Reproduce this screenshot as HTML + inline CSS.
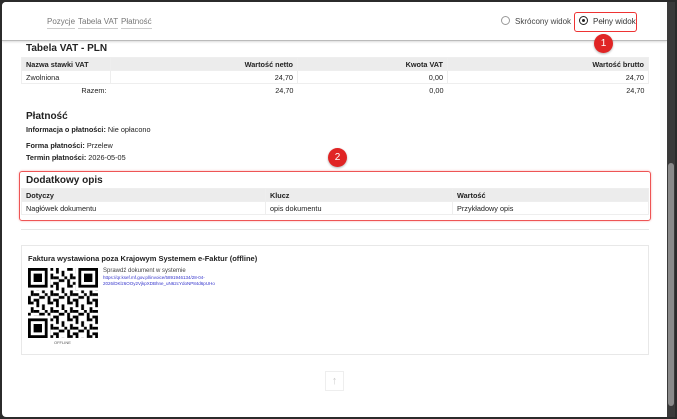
<!DOCTYPE html>
<html><head><meta charset="utf-8"><style>
*{margin:0;padding:0;box-sizing:border-box}
body{width:677px;height:419px;overflow:hidden;background:#2b2b2b;font-family:"Liberation Sans",sans-serif;color:#222;position:relative}
.win{position:absolute;left:2px;top:2px;width:665px;height:415px;background:#fff;border-radius:4px 0 0 4px;overflow:hidden}
.sb{position:absolute;left:667px;top:2px;width:8px;height:415px;background:#3a3a3a}
.thumb{position:absolute;left:668px;top:163px;width:6px;height:243px;background:#8a8a8a;border-radius:3px}
.hdr{position:absolute;left:0;top:0;width:665px;height:39px;background:#fff;border-bottom:1px solid #bbb;box-shadow:0 1px 2px rgba(0,0,0,.15)}
.tab{position:absolute;top:15px;font-size:8px;color:#777;border-bottom:1px solid #ccc;padding-bottom:2px}
.radio{position:absolute;width:9px;height:9px;border:1px solid #999;border-radius:50%}
.abs{position:absolute}
.badge{position:absolute;width:19px;height:19px;border-radius:50%;background:#e02424;color:#fff;font-size:10px;text-align:center;line-height:19px;box-shadow:0 1px 2px rgba(0,0,0,.3)}
table{border-collapse:collapse;font-size:7.3px;position:absolute}
td,th{height:13px;padding:0 4px;border:1px solid #eee}
th{background:#ececec;font-weight:bold;text-align:left}
.r{text-align:right}
h2{position:absolute;font-size:10px;font-weight:bold}
.p{position:absolute;font-size:7.3px;left:24px}
</style></head><body>
<div class="win">
 <div class="hdr">
  <span class="tab" style="left:45px">Pozycje</span>
  <span class="tab" style="left:76px">Tabela VAT</span>
  <span class="tab" style="left:119px">Płatność</span>
  <div class="radio" style="left:499px;top:14px"></div>
  <span class="abs" style="left:513px;top:15px;font-size:8px;color:#444">Skrócony widok</span>
  <div class="abs" style="left:572px;top:10px;width:63px;height:20px;border:1.5px solid #e33;border-radius:3px"></div>
  <div class="radio" style="left:577px;top:14px;border-color:#222"><div style="position:absolute;left:2px;top:2px;width:3px;height:3px;background:#222;border-radius:50%"></div></div>
  <span class="abs" style="left:591px;top:15px;font-size:8px;color:#333">Pełny widok</span>
 </div>
 <div class="badge" style="left:592px;top:32px">1</div>
 <h2 style="left:24px;top:41px">Tabela VAT - PLN</h2>
 <table style="left:19px;top:55px;width:628px">
  <tr><th style="width:89px">Nazwa stawki VAT</th><th class="r" style="width:187px">Wartość netto</th><th class="r" style="width:150px">Kwota VAT</th><th class="r">Wartość brutto</th></tr>
  <tr><td>Zwolniona</td><td class="r">24,70</td><td class="r">0,00</td><td class="r">24,70</td></tr>
  <tr><td class="r" style="border:none">Razem:</td><td class="r" style="border:none">24,70</td><td class="r" style="border:none">0,00</td><td class="r" style="border:none">24,70</td></tr>
 </table>
 <h2 style="left:24px;top:109px">Płatność</h2>
 <div class="p" style="top:123px"><b>Informacja o płatności:</b> Nie opłacono</div>
 <div class="p" style="top:139px"><b>Forma płatności:</b> Przelew</div>
 <div class="p" style="top:151px"><b>Termin płatności:</b> 2026-05-05</div>
 <div class="badge" style="left:326px;top:146px">2</div>
 <div class="abs" style="left:17px;top:169px;width:632px;height:50px;border:1.5px solid #e55;border-radius:3px;box-shadow:0 0 2px rgba(230,60,60,.4)"></div>
 <h2 style="left:24px;top:173px">Dodatkowy opis</h2>
 <table style="left:19px;top:186px;width:628px">
  <tr><th style="width:244px">Dotyczy</th><th style="width:187px">Klucz</th><th>Wartość</th></tr>
  <tr><td>Nagłówek dokumentu</td><td>opis dokumentu</td><td>Przykładowy opis</td></tr>
 </table>
 <div class="abs" style="left:19px;top:227px;width:628px;height:1px;background:#e6e6e6"></div>
 <div class="abs" style="left:19px;top:243px;width:628px;height:110px;border:1px solid #e8e8e8"></div>
 <div class="abs" style="left:26px;top:252px;font-size:7.5px;font-weight:bold">Faktura wystawiona poza Krajowym Systemem e-Faktur (offline)</div>
 <svg class="abs" style="left:26px;top:266px" width="70" height="70" viewBox="0 0 25 25">
  <defs><pattern id="q" width="7" height="6" patternUnits="userSpaceOnUse">
   <rect x="0" y="0" width="2" height="1"/><rect x="3" y="0" width="1" height="2"/><rect x="1" y="2" width="1" height="2"/><rect x="2" y="3" width="2" height="1"/><rect x="4" y="4" width="2" height="1"/><rect x="0" y="4" width="1" height="2"/><rect x="5" y="1" width="1" height="2"/><rect x="6" y="3" width="1" height="1"/><rect x="2" y="5" width="2" height="1"/>
  </pattern></defs>
  <rect width="25" height="25" fill="url(#q)"/>
  <g><rect x="0" y="0" width="8" height="8" fill="#fff"/><rect x="0" y="0" width="7" height="7"/><rect x="1" y="1" width="5" height="5" fill="#fff"/><rect x="2" y="2" width="3" height="3"/></g>
  <g><rect x="17" y="0" width="8" height="8" fill="#fff"/><rect x="18" y="0" width="7" height="7"/><rect x="19" y="1" width="5" height="5" fill="#fff"/><rect x="20" y="2" width="3" height="3"/></g>
  <g><rect x="0" y="17" width="8" height="8" fill="#fff"/><rect x="0" y="18" width="7" height="7"/><rect x="1" y="19" width="5" height="5" fill="#fff"/><rect x="2" y="20" width="3" height="3"/></g>
 </svg>
 <div class="abs" style="left:52px;top:338px;font-size:4px;color:#555">OFFLINE</div>
 <div class="abs" style="left:101px;top:266px;font-size:6px;color:#444">Sprawdź dokument w systemie</div>
 <div class="abs" style="left:101px;top:273px;font-size:4.5px;color:#33c;line-height:6px">https://qr.ksef.mf.gov.pl/invoice/5891946134/28-04-<br>2026/DKlz6OOy2VjkpXDBhne_uN62cYdoNP84d6pUHo</div>
 <div class="abs" style="left:323px;top:369px;width:19px;height:20px;border:1px solid #eee;color:#ccc;font-size:11px;text-align:center;line-height:18px">↑</div>
</div>
<div class="sb"></div><div class="thumb"></div>
</body></html>
